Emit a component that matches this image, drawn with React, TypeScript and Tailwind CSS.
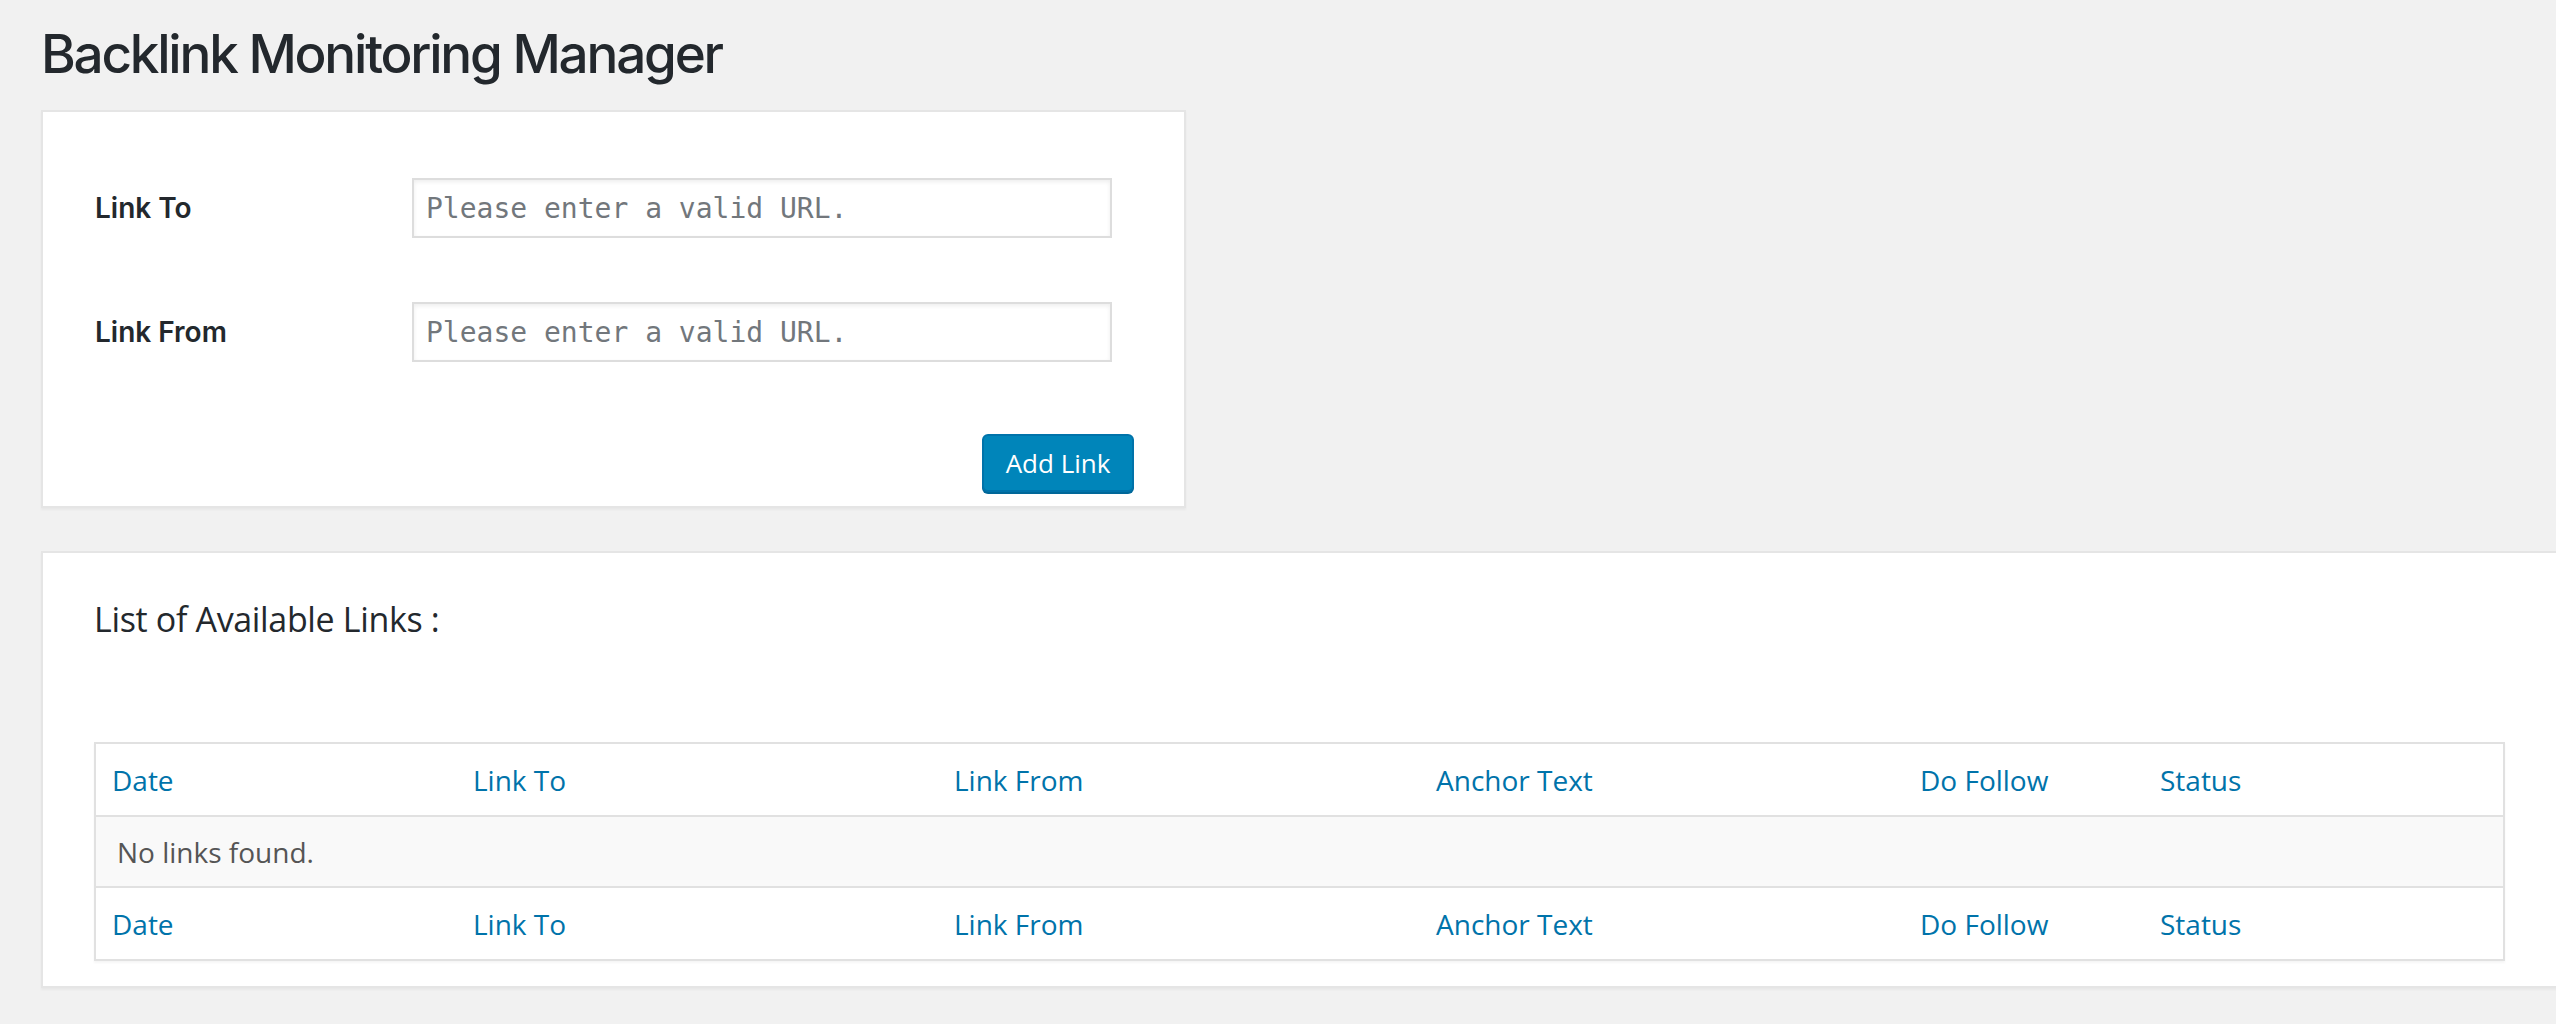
import React from 'react';

const columns = [
  { label: 'Date' },
  { label: 'Link To' },
  { label: 'Link From' },
  { label: 'Anchor Text' },
  { label: 'Do Follow' },
  { label: 'Status' },
];

const HeaderRow: React.FC = () => (
  <div className="grid h-[71px] grid-cols-[361px_481px_482px_484px_240px_1fr] items-center">
    {columns.map((col) => (
      <a
        key={col.label}
        href="#"
        className="pl-[16px] font-['Open_Sans',sans-serif] text-[28px] text-[#0073aa]"
      >
        {col.label}
      </a>
    ))}
  </div>
);

const App: React.FC = () => {
  return (
    <div className="min-h-screen overflow-hidden bg-[#f1f1f1] pl-[41px] text-[#23282d]">
      {/* Page title */}
      <h1 className="pt-[22px] font-['Inter',sans-serif] text-[53px] font-medium leading-[64px] tracking-[-0.042em]">
        Backlink Monitoring Manager
      </h1>

      {/* Add link form */}
      <div className="mt-[24px] w-[1145px] border-2 border-[#e5e5e5] bg-white pt-[66px] pr-[50px] pb-[14px] pl-[52px] shadow-[0_2px_2px_rgba(0,0,0,0.04)]">
        <div className="flex flex-col gap-[64px]">
          <div className="grid grid-cols-[317px_700px] items-center">
            <label className="font-['Inter',sans-serif] text-[28px] font-semibold">Link To</label>
            <input
              type="text"
              placeholder="Please enter a valid URL."
              className="h-[60px] border-2 border-[#dddddd] bg-white px-[12px] font-['DejaVu_Sans_Mono',monospace] text-[28px] shadow-[inset_0_2px_4px_rgba(0,0,0,0.07)] outline-none placeholder:text-[#72777c]"
            />
          </div>
          <div className="grid grid-cols-[317px_700px] items-center">
            <label className="font-['Inter',sans-serif] text-[28px] font-semibold">Link From</label>
            <input
              type="text"
              placeholder="Please enter a valid URL."
              className="h-[60px] border-2 border-[#dddddd] bg-white px-[12px] font-['DejaVu_Sans_Mono',monospace] text-[28px] shadow-[inset_0_2px_4px_rgba(0,0,0,0.07)] outline-none placeholder:text-[#72777c]"
            />
          </div>
        </div>
        <div className="mt-[72px] flex justify-end">
          <button className="h-[58px] w-[152px] rounded-[6px] border-2 border-[#0073aa] bg-[#0085ba] font-['Open_Sans',sans-serif] text-[26px] font-medium text-white shadow-[0_2px_0_#006799]">
            Add Link
          </button>
        </div>
      </div>

      {/* List of links */}
      <div className="mt-[43px] w-[2517px] border-2 border-[#e5e5e5] bg-white pt-[46px] pr-[51px] pb-[25px] pl-[51px] shadow-[0_2px_2px_rgba(0,0,0,0.04)]">
        <h3 className="font-['Open_Sans',sans-serif] text-[34px] leading-[40px] tracking-[-0.01em] text-[#23282d]">
          List of Available Links :
        </h3>
        <div className="mt-[103px] w-[2411px] border-2 border-[#e1e1e1] shadow-[0_2px_2px_rgba(0,0,0,0.04)]">
          <HeaderRow />
          <div className="flex h-[73px] items-center border-y-2 border-[#e1e1e1] bg-[#f9f9f9] pl-[21px] font-['Open_Sans',sans-serif] text-[28px] text-[#555555]">
            No links found.
          </div>
          <HeaderRow />
        </div>
      </div>
    </div>
  );
};

export default App;
